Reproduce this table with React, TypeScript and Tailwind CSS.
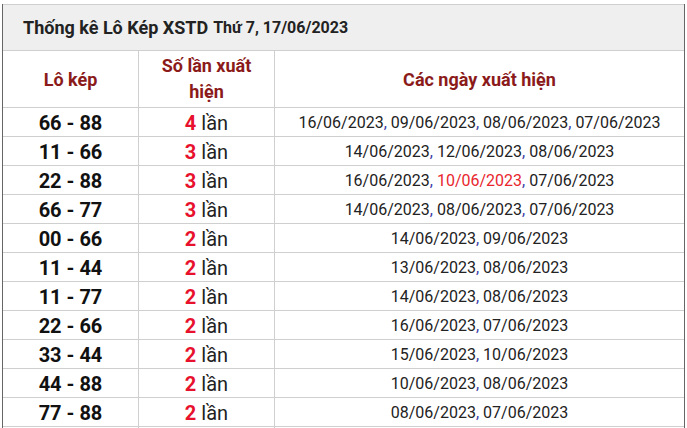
import React from 'react';

type Row = { pair: string; count: number; dates: { d: string; hot?: boolean }[] };

const rows: Row[] = [
  { pair: '66 - 88', count: 4, dates: [{ d: '16/06/2023' }, { d: '09/06/2023' }, { d: '08/06/2023' }, { d: '07/06/2023' }] },
  { pair: '11 - 66', count: 3, dates: [{ d: '14/06/2023' }, { d: '12/06/2023' }, { d: '08/06/2023' }] },
  { pair: '22 - 88', count: 3, dates: [{ d: '16/06/2023' }, { d: '10/06/2023', hot: true }, { d: '07/06/2023' }] },
  { pair: '66 - 77', count: 3, dates: [{ d: '14/06/2023' }, { d: '08/06/2023' }, { d: '07/06/2023' }] },
  { pair: '00 - 66', count: 2, dates: [{ d: '14/06/2023' }, { d: '09/06/2023' }] },
  { pair: '11 - 44', count: 2, dates: [{ d: '13/06/2023' }, { d: '08/06/2023' }] },
  { pair: '11 - 77', count: 2, dates: [{ d: '14/06/2023' }, { d: '08/06/2023' }] },
  { pair: '22 - 66', count: 2, dates: [{ d: '16/06/2023' }, { d: '07/06/2023' }] },
  { pair: '33 - 44', count: 2, dates: [{ d: '15/06/2023' }, { d: '10/06/2023' }] },
  { pair: '44 - 88', count: 2, dates: [{ d: '10/06/2023' }, { d: '08/06/2023' }] },
  { pair: '77 - 88', count: 2, dates: [{ d: '08/06/2023' }, { d: '07/06/2023' }] },
];

export default function App() {
  return (
    <div className="w-[687px] h-[428px] overflow-hidden bg-white font-['Roboto',sans-serif]">
      <div className="mx-[2px] h-full border-x border-[#666]">
        <div className="mt-[4px] border-t border-[#cfcfcf]">
          {/* title */}
          <div className="h-[46px] bg-[#efefef] border-b border-[#cfcfcf] flex items-center pl-[20px] text-[#222] font-bold">
            <span className="text-[18px]">Thống kê Lô Kép XSTD</span>
            <span className="text-[16px] ml-[5px]">Thứ 7, 17/06/2023</span>
          </div>

          {/* column heads */}
          <div className="grid grid-cols-[136px_136px_1fr] h-[57px] border-b border-[#cfcfcf] text-[#8b1a1a] font-bold text-[18px]">
            <div className="border-r border-[#cfcfcf] flex items-center justify-center">Lô kép</div>
            <div className="border-r border-[#cfcfcf] flex items-center justify-center text-center leading-[26px] px-[18px]">
              Số lần xuất hiện
            </div>
            <div className="flex items-center justify-center">Các ngày xuất hiện</div>
          </div>

          {rows.map((r) => (
            <div key={r.pair} className="grid grid-cols-[136px_136px_1fr] h-[29px] border-b border-[#cfcfcf]">
              <div className="border-r border-[#cfcfcf] flex items-center justify-center font-bold text-[20px] text-[#111]">
                {r.pair}
              </div>
              <div className="border-r border-[#cfcfcf] flex items-center justify-center text-[20px] text-[#222]">
                <span className="font-bold text-[#e8112d] mr-[5px]">{r.count}</span>
                lần
              </div>
              <div className="flex items-center justify-center text-[16px] text-[#222]">
                {r.dates.map((x, i) => (
                  <React.Fragment key={i}>
                    {i > 0 && <span className="text-[#3b3ba6] mr-[4px]">,</span>}
                    <span className={x.hot ? 'text-[#e8262d]' : ''}>{x.d}</span>
                  </React.Fragment>
                ))}
              </div>
            </div>
          ))}
        </div>
      </div>
    </div>
  );
}
